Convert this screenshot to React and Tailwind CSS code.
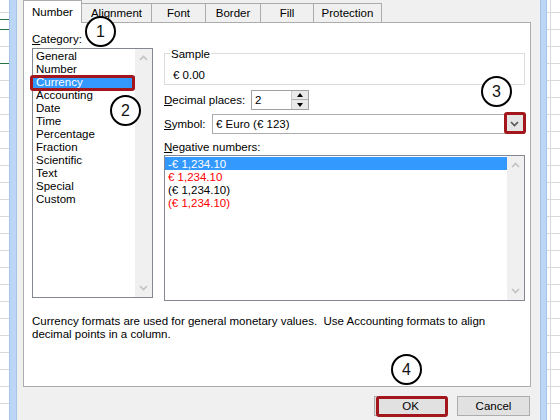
import React from 'react';

const SheetRows = ({ greenAt = [] }) => (
  <div className="flex flex-col pt-[12px]">
    {Array.from({ length: 25 }).map((_, i) => (
      <div
        key={i}
        className={`h-[17px] shrink-0 border-t ${greenAt.includes(i) ? 'border-[#217346]' : 'border-[#d9d9d9]'}`}
      >
        {i === 0 && greenAt.length > 0 && <div className="mt-[6px] h-px bg-[#217346]" />}
      </div>
    ))}
  </div>
);

const Chevron = ({ up, color = '#c2c2c2' }) => (
  <svg width="9" height="6" viewBox="0 0 9 6">
    <polyline
      points={up ? '1,5 4.5,1.5 8,5' : '1,1 4.5,4.5 8,1'}
      fill="none"
      stroke={color}
      strokeWidth="1.6"
    />
  </svg>
);

const ScrollBar = () => (
  <div className="w-[17px] shrink-0 bg-[#f0f0f0] flex flex-col items-center justify-between py-[6px]">
    <Chevron up />
    <Chevron />
  </div>
);

const Circle = ({ n, className }) => (
  <div
    className={`absolute w-[31px] h-[31px] rounded-full border-[2.5px] border-black bg-white flex items-center justify-center text-[16px] text-[#111] font-['Liberation_Sans',sans-serif] ${className}`}
  >
    {n}
  </div>
);

const RedBox = ({ className }) => (
  <div className={`absolute border-[3px] border-[#a3161c] rounded-[3px] ${className}`} />
);

const categories = [
  'General', 'Number', 'Currency', 'Accounting', 'Date', 'Time',
  'Percentage', 'Fraction', 'Scientific', 'Text', 'Special', 'Custom',
];

const negatives = [
  { t: '-€ 1,234.10', c: 'text-white bg-[#3399ff]' },
  { t: '€ 1,234.10', c: 'text-[#ff0000]' },
  { t: '(€ 1,234.10)', c: 'text-black' },
  { t: '(€ 1,234.10)', c: 'text-[#ff0000]' },
];

const tabs = [
  { label: 'Number', w: 'w-[59px]' },
  { label: 'Alignment', w: 'w-[71px]' },
  { label: 'Font', w: 'w-[55px]' },
  { label: 'Border', w: 'w-[56px]' },
  { label: 'Fill', w: 'w-[54px]' },
  { label: 'Protection', w: 'w-[69px]' },
];

export default function App() {
  return (
    <div className="relative w-[560px] h-[420px] overflow-hidden flex bg-white text-[11.5px] leading-[13px] text-black whitespace-nowrap font-['Liberation_Sans',sans-serif]">
      {/* sheet left */}
      <div className="w-[9px] shrink-0 bg-white">
        <SheetRows greenAt={[1, 3]} />
      </div>
      <div className="w-[8px] shrink-0 bg-[#bcd6f5] border-x border-[#a6c4ea]" />

      {/* dialog */}
      <div className="w-[523px] shrink-0 bg-[#f0f0f0] flex flex-col pl-[6px] pr-[9px]">
        <div className="h-[22px] flex items-end shrink-0">
          {tabs.map((t, i) => (
            <div
              key={t.label}
              className={`${t.w} -ml-px first:ml-0 flex items-center justify-center border border-b-0 border-[#acacac] ${
                i === 0 ? 'h-[23px] bg-white relative z-10 -mb-px' : 'h-[19px] bg-[#f0f0f0]'
              }`}
            >
              {t.label}
            </div>
          ))}
        </div>

        <div className="h-[365px] border border-[#acacac] bg-white flex flex-col">
          <div className="flex">
            {/* category column */}
            <div className="pl-[8px] pt-[10px] w-[130px]">
              <div>
                <span className="underline">C</span>ategory:
              </div>
              <div className="mt-[2px] w-[121px] h-[250px] border border-[#828790] flex">
                <div className="flex-1 flex flex-col pt-px">
                  {categories.map((c) => (
                    <div
                      key={c}
                      className={`h-[13px] pl-[3px] ${c === 'Currency' ? 'bg-[#3399ff] text-white' : ''}`}
                    >
                      {c}
                    </div>
                  ))}
                </div>
                <ScrollBar />
              </div>
            </div>

            {/* right column */}
            <div className="ml-[10px] w-[361px] flex flex-col">
              <div className="relative mt-[30px] h-[32px] border border-[#dcdcdc] pl-[8px] pt-[15px]">
                <span className="absolute -top-[6px] left-[5px] bg-white px-px">Sample</span>
                € 0.00
              </div>

              <div className="mt-[5px] h-[20px] flex items-center">
                <div className="w-[87px] pt-px">
                  <span className="underline">D</span>ecimal places:
                </div>
                <div className="w-[58px] h-[20px] border border-[#a0a0a0] flex">
                  <div className="flex-1 pl-[3px] flex items-center">2</div>
                  <div className="w-[17px] flex flex-col border-l border-[#c8c8c8] bg-[#e9e9e9]">
                    <div className="h-[9px] flex items-center justify-center border-b border-[#b0b0b0]">
                      <div className="w-0 h-0 border-x-[3.5px] border-x-transparent border-b-[4px] border-b-black" />
                    </div>
                    <div className="flex-1 flex items-center justify-center">
                      <div className="w-0 h-0 border-x-[3.5px] border-x-transparent border-t-[4px] border-t-black" />
                    </div>
                  </div>
                </div>
              </div>

              <div className="mt-[4px] h-[20px] flex items-center">
                <div className="w-[48px] pt-px">
                  <span className="underline">S</span>ymbol:
                </div>
                <div className="flex-1 h-[20px] border border-[#acacac] flex">
                  <div className="flex-1 pl-[3px] flex items-center">€ Euro (€ 123)</div>
                  <div className="w-[19px] bg-[#e5e5e5] flex items-center justify-center">
                    <Chevron color="#555" />
                  </div>
                </div>
              </div>

              <div className="mt-[7px]">
                <span className="underline">N</span>egative numbers:
              </div>
              <div className="mt-[1px] h-[146px] border border-[#828790] flex">
                <div className="flex-1 flex flex-col pt-px">
                  {negatives.map((n, i) => (
                    <div key={i} className={`h-[13px] pl-[3px] pt-px ${n.c}`}>
                      {n.t}
                    </div>
                  ))}
                </div>
                <ScrollBar />
              </div>
            </div>
          </div>

          <div className="pl-[8px] mt-[14px]">
            Currency formats are used for general monetary values.{'\u00a0'} Use Accounting formats to align
            <br />
            decimal points in a column.
          </div>
        </div>

        <div className="mt-[9px] flex justify-end gap-[10px] pr-px">
          <button type="button" className="w-[73px] h-[20px] bg-[#e1e1e1] border border-[#adadad]">
            OK
          </button>
          <button type="button" className="w-[73px] h-[20px] bg-[#e1e1e1] border border-[#adadad]">
            Cancel
          </button>
        </div>
      </div>

      <div className="w-[7px] shrink-0 bg-[#bcd6f5] border-x border-[#a6c4ea]" />
      {/* sheet right */}
      <div className="flex-1 flex bg-white">
        <div className="w-[3px]">
          <SheetRows />
        </div>
        <div className="w-px bg-[#d9d9d9]" />
        <div className="flex-1">
          <SheetRows />
        </div>
      </div>

      {/* annotations */}
      <RedBox className="left-[23px] -top-[1px] w-[59px] h-[24px]" />
      <RedBox className="left-[30px] top-[75px] w-[105px] h-[16px]" />
      <RedBox className="left-[504px] top-[112px] w-[22px] h-[22px]" />
      <RedBox className="left-[376px] top-[396px] w-[72px] h-[21px]" />
      <Circle n="1" className="left-[85px] top-[16px]" />
      <Circle n="2" className="left-[110px] top-[95px]" />
      <Circle n="3" className="left-[481px] top-[76px]" />
      <Circle n="4" className="left-[391px] top-[354px]" />
    </div>
  );
}
